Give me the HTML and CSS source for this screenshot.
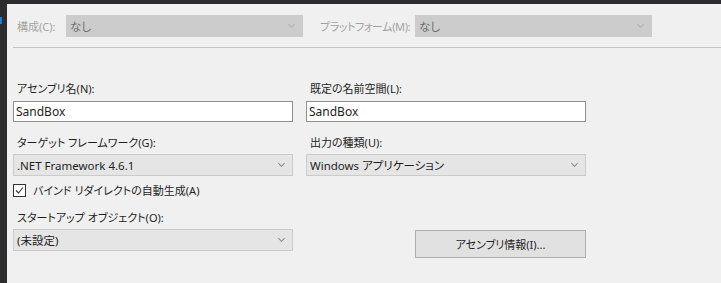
FILE: index.html
```html
<!DOCTYPE html>
<html lang="ja">
<head>
    <meta charset="UTF-8">
    <title>アプリケーション</title>
    <link rel="stylesheet" href="styles.css">
</head>
<body>
    <div class="top-bar"></div>
    <div class="frame">
        <div class="side-strip"><div class="side-mark"></div></div>
        <div class="panel">
            <div class="config-row">
                <span class="config-label">構成(C):</span>
                <div class="combo disabled"><span>なし</span><span class="arrow"></span></div>
                <span class="config-label platform">プラットフォーム(M):</span>
                <div class="combo disabled"><span>なし</span><span class="arrow"></span></div>
            </div>
            <div class="separator"></div>

            <div class="form-grid">
                <div class="field">
                    <label>アセンブリ名(N):</label>
                    <div class="textbox">SandBox</div>
                </div>
                <div class="field">
                    <label>既定の名前空間(L):</label>
                    <div class="textbox">SandBox</div>
                </div>

                <div class="field">
                    <label>ターゲット フレームワーク(G):</label>
                    <div class="combo"><span>.NET Framework 4.6.1</span><span class="arrow"></span></div>
                </div>
                <div class="field">
                    <label>出力の種類(U):</label>
                    <div class="combo"><span>Windows アプリケーション</span><span class="arrow"></span></div>
                </div>

                <div class="check-row">
                    <span class="checkbox">
                        <svg width="11" height="11" viewBox="0 0 11 11"><path d="M2 5.5 L4.5 8 L9 2.5" fill="none" stroke="#333" stroke-width="1.1"/></svg>
                    </span>
                    <span>バインド リダイレクトの自動生成(A)</span>
                </div>

                <div class="field startup">
                    <label>スタートアップ オブジェクト(O):</label>
                    <div class="combo"><span>(未設定)</span><span class="arrow"></span></div>
                </div>
                <div class="button-cell">
                    <button type="button">アセンブリ情報(I)...</button>
                </div>
            </div>
        </div>
    </div>
</body>
</html>
```

FILE: styles.css
```css
body {
    margin: 0;
    background-color: #f0f0f0;
    font-family: "Noto Sans", "Noto Sans CJK JP", sans-serif;
    font-size: 11px;
    font-feature-settings: "palt";
    color: #1e1e1e;
    height: 283px;
    overflow: hidden;
}

.top-bar {
    height: 4px;
    background-color: #2b2b2e;
}

.frame {
    display: flex;
    height: 279px;
}

.side-strip {
    width: 7px;
    background-color: #2d2d30;
}

.side-mark {
    width: 2px;
    height: 7px;
    margin-top: 13px;
    background-color: #1c7fd6;
}

.panel {
    flex: 1;
    padding-left: 6px;
}

.config-row {
    display: flex;
    align-items: center;
    margin-top: 11px;
    padding-left: 4px;
    height: 22px;
}

.config-label {
    color: #a2a2a2;
    width: 49px;
    white-space: nowrap;
}

.config-label.platform {
    width: 95px;
    margin-left: 17px;
    letter-spacing: -0.4px;
}

.combo {
    display: flex;
    align-items: center;
    justify-content: space-between;
    box-sizing: border-box;
    height: 22px;
    padding: 0 8px 0 3px;
    background-color: #e5e5e5;
    border: 1px solid #cbcbcb;
    font-size: 11.5px;
}

.combo.disabled {
    width: 237px;
    background-color: #cccccc;
    border-color: #cccccc;
    color: #6d6d6d;
}

.arrow {
    width: 4px;
    height: 4px;
    border-right: 1px solid #8a8a8a;
    border-bottom: 1px solid #8a8a8a;
    transform: rotate(45deg);
    margin-top: -3px;
}

.combo.disabled .arrow {
    border-color: #b0b0b0;
}

.separator {
    height: 1px;
    background-color: #c4c4c4;
    margin-top: 10px;
}

.form-grid {
    display: grid;
    grid-template-columns: 280px 280px;
    column-gap: 13px;
    margin-top: 34px;
}

.field label {
    display: block;
    padding-left: 4px;
    height: 18px;
    line-height: 14px;
}

.textbox {
    box-sizing: border-box;
    height: 21px;
    line-height: 19px;
    padding-left: 2px;
    margin-top: 1px;
    background-color: #ffffff;
    border: 1px solid #8f8f8f;
    margin-bottom: 14px;
    font-size: 12px;
}

.field .combo {
    width: 280px;
}

.check-row {
    grid-column: 1 / 3;
    display: flex;
    align-items: center;
    gap: 7px;
    margin-top: 7px;
    height: 14px;
}

.checkbox {
    display: inline-flex;
    align-items: center;
    justify-content: center;
    box-sizing: border-box;
    width: 13px;
    height: 13px;
    background-color: #ffffff;
    border: 1px solid #333333;
}

.startup {
    margin-top: 14px;
}

.button-cell {
    padding-left: 109px;
    padding-top: 33px;
}

button {
    width: 171px;
    height: 28px;
    background-color: #e1e1e1;
    border: 1px solid #adadad;
    font-family: "Noto Sans", "Noto Sans CJK JP", sans-serif;
    font-size: 11px;
    font-feature-settings: "palt";
    color: #1e1e1e;
    padding: 0;
}
```
